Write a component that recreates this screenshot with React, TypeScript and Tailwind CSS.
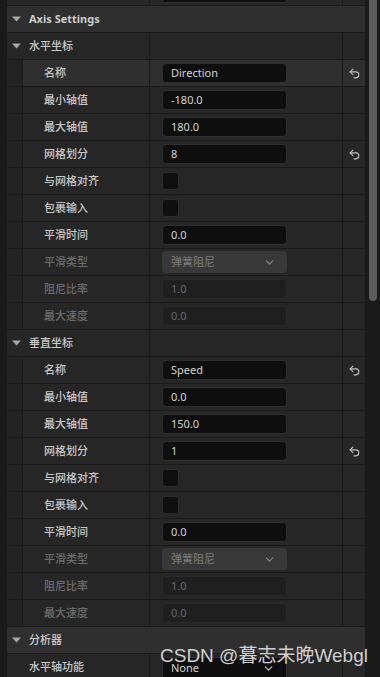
import { Undo2, ChevronDown } from 'lucide-react';

type Prop = {
  label: string;
  kind: 'text' | 'check' | 'select' | 'disabled';
  value?: string;
  reset?: boolean;
  hover?: boolean;
  dim?: boolean;
};

const font = { fontFamily: '"Noto Sans", "Noto Sans CJK SC", sans-serif' };

function axisRows(name: string, min: string, max: string, grid: string): Prop[] {
  return [
    { label: '名称', kind: 'text', value: name, reset: true, hover: name === 'Direction' },
    { label: '最小轴值', kind: 'text', value: min },
    { label: '最大轴值', kind: 'text', value: max },
    { label: '网格划分', kind: 'text', value: grid, reset: true },
    { label: '与网格对齐', kind: 'check' },
    { label: '包裹输入', kind: 'check' },
    { label: '平滑时间', kind: 'text', value: '0.0' },
    { label: '平滑类型', kind: 'select', value: '弹簧阻尼', dim: true },
    { label: '阻尼比率', kind: 'disabled', value: '1.0', dim: true },
    { label: '最大速度', kind: 'disabled', value: '0.0', dim: true },
  ];
}

function Arrow() {
  return (
    <svg width="9" height="6" viewBox="0 0 9 6" className="shrink-0">
      <path d="M0 0.5h9L4.5 5.5z" fill="#a8a8a8" />
    </svg>
  );
}

function HeaderRow({ label, bold }: { label: string; bold?: boolean }) {
  return (
    <div className="h-[27px] shrink-0 flex items-center bg-[#2f2f2f] border-b border-[#1b1b1b] pl-[5px] gap-[8px]">
      <Arrow />
      <span className={`text-[11px] text-[#cccccc] ${bold ? 'font-bold' : 'font-medium'}`}>{label}</span>
    </div>
  );
}

function CategoryRow({ label }: { label: string }) {
  return (
    <div className="h-[27px] shrink-0 flex bg-[#262626] border-b border-[#1b1b1b]">
      <div className="w-[143px] flex items-center pl-[5px] gap-[8px] border-r border-[#1b1b1b]">
        <Arrow />
        <span className="text-[11px] font-medium text-[#c8c8c8]">{label}</span>
      </div>
      <div className="flex-1 border-r border-[#1b1b1b]" />
      <div className="w-[22px]" />
    </div>
  );
}

function Value({ p }: { p: Prop }) {
  if (p.kind === 'check') {
    return <div className="w-[17px] h-[18px] rounded-[3px] bg-[#0f0f0f] border border-[#2c2c2c]" />;
  }
  if (p.kind === 'select') {
    return (
      <div className="w-[125px] h-[22px] rounded-[4px] bg-[#383838] flex items-center justify-between pl-[9px] pr-[11px]">
        <span className="text-[11px] text-[#7e7e7e]">{p.value}</span>
        <ChevronDown size={13} strokeWidth={2} color="#8a8a8a" />
      </div>
    );
  }
  const off = p.kind === 'disabled';
  return (
    <div
      className={`w-[125px] h-[20px] rounded-[4px] border flex items-center pl-[8px] ${
        off ? 'bg-[#1f1f1f] border-[#2a2a2a]' : 'bg-[#0e0e0e] border-[#2e2e2e]'
      }`}
    >
      <span className={`text-[11px] ${off ? 'text-[#686868]' : 'text-[#d4d4d4]'}`}>{p.value}</span>
    </div>
  );
}

function PropRow({ p }: { p: Prop }) {
  const bg = p.hover ? 'bg-[#2f2f2f]' : 'bg-[#262626]';
  return (
    <div className="h-[27px] shrink-0 flex border-b border-[#1b1b1b]">
      <div className="w-[16px] bg-[#232323] border-r border-[#1b1b1b]" />
      <div className={`flex-1 flex ${bg}`}>
        <div className="w-[127px] pl-[21px] flex items-center border-r border-[#1b1b1b]">
          <span className={`text-[11px] font-medium ${p.dim ? 'text-[#6c6c6c]' : 'text-[#c8c8c8]'}`}>{p.label}</span>
        </div>
        <div className="flex-1 flex items-center pl-[12px] border-r border-[#1b1b1b]">
          <Value p={p} />
        </div>
        <div className="w-[22px] flex items-center justify-center">
          {p.reset && <Undo2 size={13} strokeWidth={2} color="#c4c4c4" />}
        </div>
      </div>
    </div>
  );
}

export default function App() {
  const horizontal = axisRows('Direction', '-180.0', '180.0', '8');
  const vertical = axisRows('Speed', '0.0', '150.0', '1');

  return (
    <div className="relative w-[380px] h-[677px] overflow-hidden bg-[#1a1a1a] flex" style={font}>
      <div className="w-[7px] shrink-0" />
      <div className="w-[358px] shrink-0 flex flex-col">
        <div className="h-[6px] shrink-0 flex bg-[#262626] border-b border-[#1b1b1b]">
          <div className="w-[143px] border-r border-[#1b1b1b]" />
          <div className="flex-1 pl-[12px] border-r border-[#1b1b1b]">
            <div className="w-[125px] h-[3px] bg-[#0e0e0e] rounded-b-[4px] border-b border-x border-[#2e2e2e]" />
          </div>
          <div className="w-[22px]" />
        </div>
        <HeaderRow label="Axis Settings" bold />
        <CategoryRow label="水平坐标" />
        {horizontal.map((p) => (
          <PropRow key={'h' + p.label} p={p} />
        ))}
        <CategoryRow label="垂直坐标" />
        {vertical.map((p) => (
          <PropRow key={'v' + p.label} p={p} />
        ))}
        <HeaderRow label="分析器" />
        <div className="h-[27px] shrink-0 flex bg-[#262626] border-b border-[#1b1b1b]">
          <div className="w-[143px] flex items-center pl-[22px] border-r border-[#1b1b1b]">
            <span className="text-[11px] font-medium text-[#c8c8c8]">水平轴功能</span>
          </div>
          <div className="flex-1 flex items-end pl-[12px] border-r border-[#1b1b1b]">
            <div className="w-[125px] h-[23px] rounded-t-[4px] bg-[#0e0e0e] border border-[#2e2e2e] flex items-center justify-between pl-[8px] pr-[11px]">
              <span className="text-[11px] text-[#d4d4d4]">None</span>
              <ChevronDown size={13} strokeWidth={2} color="#c4c4c4" />
            </div>
          </div>
          <div className="w-[22px]" />
        </div>
      </div>
      <div className="w-[4px] shrink-0" />
      <div className="w-[8px] shrink-0">
        <div className="h-[301px] bg-[#5c5c5c] rounded-b-[4px]" />
      </div>

      <div className="absolute left-[160px] top-[643px] text-[19px] leading-[26px] text-[#d0d0d0] whitespace-nowrap" style={{ fontFamily: '"Liberation Sans", "Noto Sans CJK SC", sans-serif' }}>
        CSDN @暮志未晚Webgl
      </div>
    </div>
  );
}
